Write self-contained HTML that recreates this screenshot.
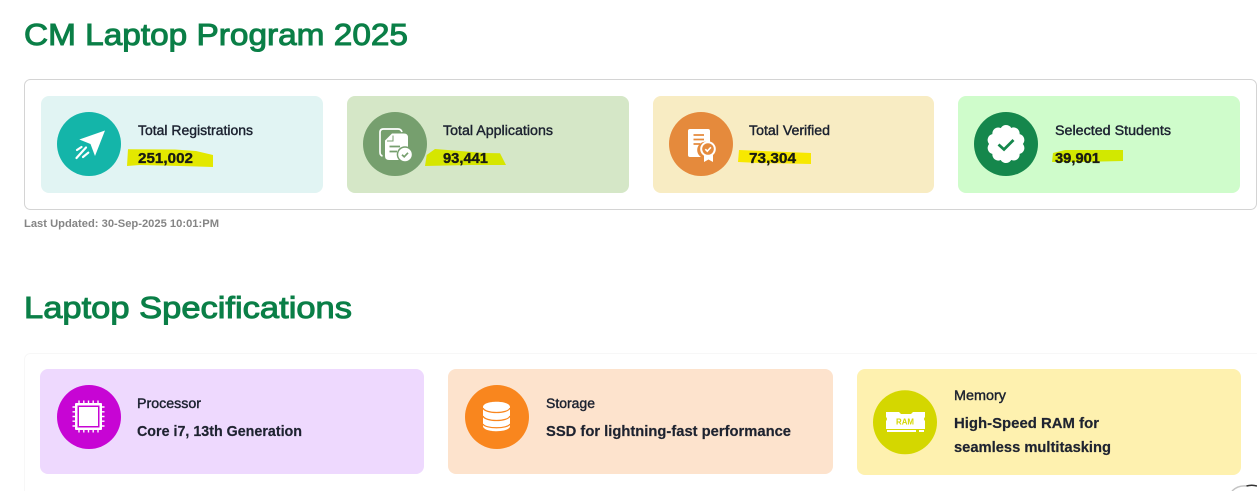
<!DOCTYPE html>
<html lang="en">
<head>
<meta charset="utf-8">
<title>CM Laptop Program 2025</title>
<style>
html,body{margin:0;padding:0;background:#fff;width:1257px;height:491px;overflow:hidden}
svg{display:block}
text{font-family:"Liberation Sans",sans-serif;white-space:pre}
.h{font-size:31px;fill:#0a7f47;stroke:#0a7f47;stroke-width:1}
.l{font-size:13.5px;fill:#1c2230;stroke:#1c2230;stroke-width:.4}
.v{font-size:15px;font-weight:700;fill:#1a1c14;stroke:#1a1c14;stroke-width:.35}
.s{font-size:15px;font-weight:700;fill:#1e2330;stroke:#1e2330;stroke-width:.2}
</style>
</head>
<body>
<svg width="1257" height="491" viewBox="0 0 1257 491" xmlns="http://www.w3.org/2000/svg">
<rect width="1257" height="491" fill="#fff"/>

<text class="h" x="24" y="45" textLength="384" lengthAdjust="spacingAndGlyphs">CM Laptop Program 2025</text>

<rect x="24.500" y="79.500" width="1232" height="130" rx="6" fill="#fff" stroke="#d4d4d4"/>

<!-- Stat cards -->
<rect x="41" y="96" width="282" height="97" rx="8" fill="#e1f4f3"/>
<rect x="347" y="96" width="282" height="97" rx="8" fill="#d5e7c7"/>
<rect x="653" y="96" width="281" height="97" rx="8" fill="#f8ecc3"/>
<rect x="958" y="96" width="282" height="97" rx="8" fill="#cffccb"/>

<circle cx="89" cy="144" r="32" fill="#14b5a9"/>
<circle cx="395" cy="144" r="32" fill="#769f6e"/>
<circle cx="701" cy="144" r="32" fill="#e58a3c"/>
<circle cx="1006" cy="144" r="32" fill="#15874c"/>

<!-- Paper plane -->
<path d="M105 130.500 L79.300 139.500 L90.500 144 L95 156 Z" fill="#fff"/>
<path d="M77 150 L81.500 147 M76.500 158 L86 147.500 M83 157 L88.300 152.700" stroke="#fff" stroke-width="2.200" stroke-linecap="round" fill="none"/>

<!-- Applications -->
<path d="M382.500 156 Q380 155.500 380 152 V132.500 Q380 129 383.500 129 H398 Q401 129 402 132" fill="none" stroke="#fff" stroke-width="1.700"/>
<path d="M392 133.500 H404 Q408 133.500 408 137.500 V150 L399 160 H389 Q385 160 385 156 V140.500 Z" fill="#fff"/>
<path d="M387 141 H393 V135.500" fill="none" stroke="#769f6e" stroke-width="1"/>
<path d="M389.500 146.500 H400 M389.500 151.500 H397" stroke="#769f6e" stroke-width="1.700"/>
<circle cx="405" cy="154.500" r="8.300" fill="#769f6e"/>
<circle cx="405" cy="154.500" r="6.800" fill="#fff"/>
<path d="M402 154.700 L404.200 156.800 L408 152.800" stroke="#769f6e" stroke-width="1.700" fill="none"/>

<!-- Verified -->
<path d="M690 129 H708 Q710 129 710 131 V143 A8 8 0 0 0 701 157 H690 Q688 157 688 155 V131 Q688 129 690 129 Z" fill="#fff"/>
<path d="M693.500 135 H704 M693.500 139.500 H704 M693.500 144 H700" stroke="#e58a3c" stroke-width="1.800"/>
<path d="M704 155 V162 L708.500 159.500 L713 162 V155 Z" fill="#fff"/>
<circle cx="708" cy="149" r="7.800" fill="#fff"/>
<circle cx="708" cy="149" r="5.800" fill="#e58a3c"/>
<path d="M705.300 149.200 L707.300 151.200 L710.900 147.300" stroke="#fff" stroke-width="1.600" fill="none"/>

<!-- Selected badge -->
<g fill="#fff" transform="translate(1006 144) rotate(18)">
<circle r="15"/>
<circle cx="13" cy="0" r="6"/><circle cx="10.500" cy="7.600" r="6"/><circle cx="4" cy="12.400" r="6"/><circle cx="-4" cy="12.400" r="6"/><circle cx="-10.500" cy="7.600" r="6"/><circle cx="-13" cy="0" r="6"/><circle cx="-10.500" cy="-7.600" r="6"/><circle cx="-4" cy="-12.400" r="6"/><circle cx="4" cy="-12.400" r="6"/><circle cx="10.500" cy="-7.600" r="6"/>
</g>
<path d="M998.500 144.500 L1004 149.500 L1013.500 140" stroke="#15874c" stroke-width="2.800" fill="none"/>

<!-- Highlighter strokes -->
<path d="M128 149.300 L175 149.500 L196 151 L213 155 L213 167 L180 166 L140 165 L127 166 Z" fill="#e3e800"/>
<path d="M426.700 155 L435 149 L460 151 L484 153 L500 153.300 L506 165 L470 165 L425 166 Z" fill="#d6e600"/>
<path d="M739 150 L811 153 L811 164 L760 163 L738 162 Z" fill="#f7e800"/>
<path d="M1053 153 L1065 150 L1123 150 L1123 161 L1080 162 L1052 162 Z" fill="#d2e800"/>

<text class="l" x="138" y="135" textLength="115" lengthAdjust="spacingAndGlyphs">Total Registrations</text>
<text class="v" x="138" y="163" textLength="55" lengthAdjust="spacingAndGlyphs">251,002</text>
<text class="l" x="443" y="135" textLength="110" lengthAdjust="spacingAndGlyphs">Total Applications</text>
<text class="v" x="443" y="163" textLength="45" lengthAdjust="spacingAndGlyphs">93,441</text>
<text class="l" x="749" y="135" textLength="81" lengthAdjust="spacingAndGlyphs">Total Verified</text>
<text class="v" x="749" y="163" textLength="47" lengthAdjust="spacingAndGlyphs">73,304</text>
<text class="l" x="1055" y="135" textLength="116" lengthAdjust="spacingAndGlyphs">Selected Students</text>
<text class="v" x="1055" y="163" textLength="45" lengthAdjust="spacingAndGlyphs">39,901</text>

<text x="24" y="227" font-size="11" font-weight="700" fill="#858585" textLength="195" lengthAdjust="spacingAndGlyphs">Last Updated: 30-Sep-2025 10:01:PM</text>

<text class="h" x="24" y="318" textLength="328" lengthAdjust="spacingAndGlyphs">Laptop Specifications</text>

<!-- Specs wrapper -->
<rect x="24.500" y="353.500" width="1260" height="150" rx="6" fill="#fff" stroke="#f7f7f7"/>

<rect x="40" y="369" width="384" height="105" rx="8" fill="#eed9fe"/>
<rect x="448" y="369" width="385" height="105" rx="8" fill="#fde3cd"/>
<rect x="857" y="369" width="384" height="106" rx="8" fill="#fef1af"/>

<circle cx="89" cy="417" r="32" fill="#c705d4"/>
<circle cx="497" cy="417" r="32" fill="#f9861e"/>
<circle cx="905" cy="422.300" r="32" fill="#d4d700"/>

<!-- CPU -->
<rect x="75" y="403" width="27" height="27" rx="1" fill="#fff"/>
<rect x="77.500" y="405.500" width="22" height="22" fill="#c705d4"/>
<rect x="79" y="407" width="19" height="19" fill="#fff"/>
<path d="M79 400.500 V403 M83.800 400.500 V403 M88.500 400.500 V403 M93.200 400.500 V403 M98 400.500 V403 M79 430 V432.500 M83.800 430 V432.500 M88.500 430 V432.500 M93.200 430 V432.500 M98 430 V432.500 M72.500 407 H75 M72.500 411.800 H75 M72.500 416.500 H75 M72.500 421.200 H75 M72.500 426 H75 M102 407 H104.500 M102 411.800 H104.500 M102 416.500 H104.500 M102 421.200 H104.500 M102 426 H104.500" stroke="#fff" stroke-width="1.400"/>

<!-- Database -->
<path d="M483 407 C483 400 510 400 510 407 V426 C510 433 483 433 483 426 Z" fill="#fff"/>
<path d="M483 408 C485 414 508 414 510 408 M483 416 C485 422 508 422 510 416 M483 424 C485 429 508 429 510 424" fill="none" stroke="#f9861e" stroke-width="1.200"/>

<!-- RAM -->
<path d="M886 412 H899 L901 414 H911 L913 412 H925 V417 Q923 419 925 421 V429 H886 V421 Q888 419 886 417 Z" fill="#fff"/>
<path d="M887 431 H916 M919 431 H924" stroke="#fff" stroke-width="2"/>
<text x="896" y="424.500" font-size="8.500" font-weight="700" fill="#d4d700" textLength="18" lengthAdjust="spacingAndGlyphs">RAM</text>

<text class="l" x="137" y="408" textLength="64" lengthAdjust="spacingAndGlyphs">Processor</text>
<text class="s" x="137" y="436" textLength="165" lengthAdjust="spacingAndGlyphs">Core i7, 13th Generation</text>
<text class="l" x="546" y="408" textLength="49" lengthAdjust="spacingAndGlyphs">Storage</text>
<text class="s" x="546" y="436" textLength="245" lengthAdjust="spacingAndGlyphs">SSD for lightning-fast performance</text>
<text class="l" x="954" y="400" textLength="52" lengthAdjust="spacingAndGlyphs">Memory</text>
<text class="s" x="954" y="428" textLength="145" lengthAdjust="spacingAndGlyphs">High-Speed RAM for</text>
<text class="s" x="954" y="452" textLength="157" lengthAdjust="spacingAndGlyphs">seamless multitasking</text>

<!-- Spinner fragment -->
<path d="M1232 491 A18 18 0 0 1 1246.500 486" fill="none" stroke="#c4c4c4" stroke-width="1.500"/>
<path d="M1246.500 486 A18 18 0 0 1 1257 486" fill="none" stroke="#333" stroke-width="1.500"/>
</svg>
</body>
</html>
